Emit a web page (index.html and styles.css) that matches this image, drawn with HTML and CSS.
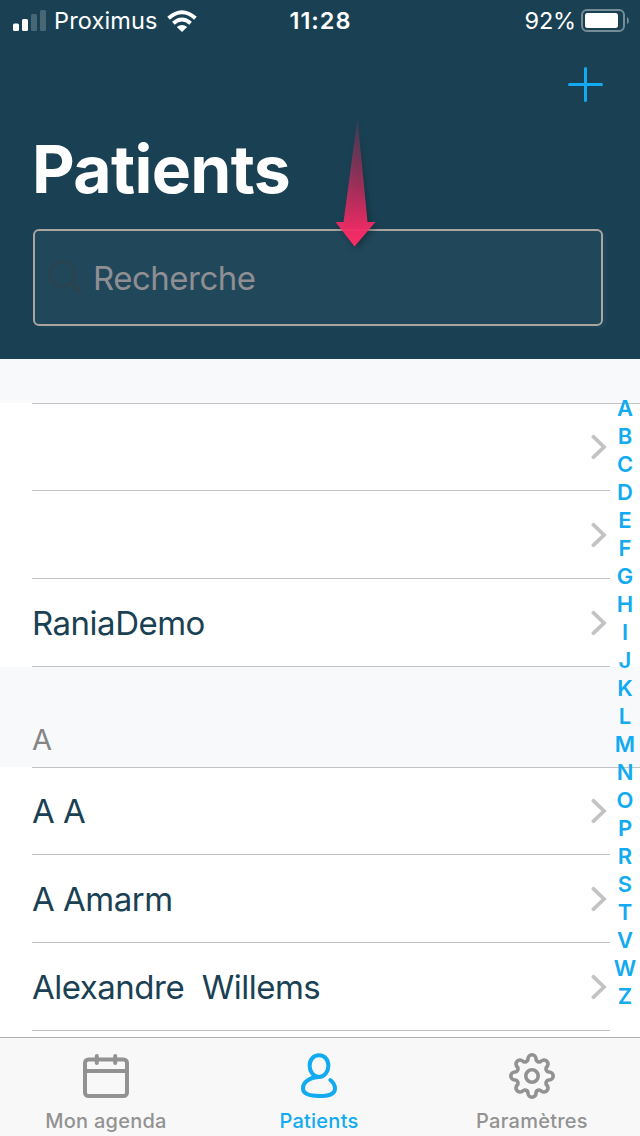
FILE: index.html
```html
<!DOCTYPE html>
<html lang="fr">
<head>
<meta charset="utf-8">
<title>Patients</title>
<link rel="stylesheet" href="styles.css">
</head>
<body>
<div class="screen">
  <header class="header">
    <div class="status">
      <div class="status-left">
        <svg class="signal" width="34" height="22" viewBox="0 0 34 22"><g fill="#fff"><rect x="0" y="13.5" width="6" height="7.5" rx="1.5"/><rect x="9" y="9" width="6" height="12" rx="1.5"/><g opacity=".2"><rect x="18" y="4" width="6" height="17" rx="1.5"/><rect x="27" y="0" width="6" height="21" rx="1.5"/></g></g></svg>
        <span class="carrier">Proximus</span>
        <svg class="wifi" width="30" height="22" viewBox="0 0 30 22"><g fill="none" stroke="#fff" stroke-width="4"><path d="M1.6 8.3Q15 -3.8 28.4 8.3"/><path d="M6.4 13.2Q15 5.8 23.6 13.2"/></g><path d="M9.8 17Q15 12.8 20.2 17L15 22Z" fill="#fff"/></svg>
      </div>
      <span class="time">11:28</span>
      <div class="status-right">
        <span class="percent">92%</span>
        <svg class="battery" width="49" height="24" viewBox="0 0 49 24"><rect x="1" y="1" width="42" height="21" rx="5" fill="none" stroke="#fff" stroke-opacity=".4" stroke-width="2"/><rect x="4" y="4" width="33" height="15" rx="2.5" fill="#fff"/><path d="M46 8Q48 9 48 11.5T46 15Z" fill="#fff" opacity=".4"/></svg>
      </div>
    </div>
    <div class="actions">
      <svg width="36" height="36" viewBox="0 0 36 36"><path d="M17.500 1.500V33.500M1.500 17.500H33.500" stroke="#12aaf0" stroke-width="3" stroke-linecap="round"/></svg>
    </div>
    <h1 class="title">Patients</h1>
    <div class="search">
      <svg class="search-icon" width="34" height="34" viewBox="0 0 34 34"><g fill="none" stroke="#2b424f"><circle cx="14" cy="14" r="12.2" stroke-width="2.7"/><path d="M23 23L31.3 31" stroke-width="4.4" stroke-linecap="round"/></g></svg>
      <span class="placeholder">Recherche</span>
    </div>
    <svg class="arrow" width="60" height="140" viewBox="0 0 60 140">
      <defs><linearGradient id="fade" x1="0" y1="0" x2="0" y2="1"><stop offset="0" stop-color="#f92b67" stop-opacity=".12"/><stop offset=".5" stop-color="#f92b67" stop-opacity=".57"/><stop offset=".85" stop-color="#f92b67" stop-opacity=".92"/><stop offset="1" stop-color="#fc2b67"/></linearGradient></defs>
      <path d="M32.5 8L42.5 112H50.5L29.5 136.5L10.5 112H18.5Z" fill="url(#fade)"/>
    </svg>
  </header>

  <main class="list">
    <div class="section section-first"></div>
    <div class="row row-first"><span></span><svg class="chevron" viewBox="0 0 16 26"><path d="M2.5 2.8L13 13L2.5 23.2"/></svg></div>
    <div class="row"><span></span><svg class="chevron" viewBox="0 0 16 26"><path d="M2.5 2.8L13 13L2.5 23.2"/></svg></div>
    <div class="row"><span>RaniaDemo</span><svg class="chevron" viewBox="0 0 16 26"><path d="M2.5 2.8L13 13L2.5 23.2"/></svg></div>
    <div class="section"><span>A</span></div>
    <div class="row row-first"><span>A A</span><svg class="chevron" viewBox="0 0 16 26"><path d="M2.5 2.8L13 13L2.5 23.2"/></svg></div>
    <div class="row"><span>A Amarm</span><svg class="chevron" viewBox="0 0 16 26"><path d="M2.5 2.8L13 13L2.5 23.2"/></svg></div>
    <div class="row"><span>Alexandre  Willems</span><svg class="chevron" viewBox="0 0 16 26"><path d="M2.5 2.8L13 13L2.5 23.2"/></svg></div>
  </main>

  <nav class="index">
    <span>A</span><span>B</span><span>C</span><span>D</span><span>E</span><span>F</span><span>G</span><span>H</span><span>I</span><span>J</span><span>K</span><span>L</span><span>M</span><span>N</span><span>O</span><span>P</span><span>R</span><span>S</span><span>T</span><span>V</span><span>W</span><span>Z</span>
  </nav>

  <footer class="tabs">
    <div class="tab">
      <svg width="48" height="48" viewBox="-24 -24 48 48" fill="none" stroke="#929292" stroke-width="4" stroke-linecap="round"><rect x="-21" y="-16.5" width="42" height="36.5" rx="3.5"/><path d="M-20 -5H20M-9.2 -20V-13M9.2 -20V-13"/></svg>
      <span>Mon agenda</span>
    </div>
    <div class="tab tab-active">
      <svg width="48" height="48" viewBox="-24 -24 48 48" fill="none" stroke="#12aaf0" stroke-width="4" stroke-linecap="round"><path d="M0 -20.7C5.8 -20.7 9.4 -16 9.4 -10.3C9.4 -4.5 5.5 1 0 1C-5.5 1 -9.4 -4.5 -9.4 -10.3C-9.4 -16 -5.8 -20.7 0 -20.7Z"/><path d="M-1 1C-9 1.4 -16 6 -16 12.3C-16 18.7 -9 20 0 20C9.500 20 16 18.7 16 12.5C16 9 14 6.200 11.300 4"/></svg>
      <span>Patients</span>
    </div>
    <div class="tab">
      <svg width="48" height="48" viewBox="-24 -24 48 48" fill="none" stroke="#929292" stroke-width="3.6"><circle r="6.200"/><path d="M-4 -17.19A4 4 0 0 1 4 -17.19A3.100 3.100 0 0 0 9.330 -14.980A4 4 0 0 1 14.980 -9.330A3.100 3.100 0 0 0 17.190 -4A4 4 0 0 1 17.190 4A3.100 3.100 0 0 0 14.980 9.330A4 4 0 0 1 9.330 14.980A3.100 3.100 0 0 0 4 17.190A4 4 0 0 1 -4 17.190A3.100 3.100 0 0 0 -9.330 14.980A4 4 0 0 1 -14.980 9.330A3.100 3.100 0 0 0 -17.190 4A4 4 0 0 1 -17.190 -4A3.100 3.100 0 0 0 -14.980 -9.330A4 4 0 0 1 -9.330 -14.980A3.100 3.100 0 0 0 -4 -17.190Z"/></svg>
      <span>Paramètres</span>
    </div>
  </footer>
</div>
</body>
</html>
```
FILE: styles.css
```css
* { box-sizing: border-box; }
body { margin: 0; font-family: Inter, "Liberation Sans", sans-serif; }
svg { display: block; flex: none; }
.screen { position: relative; width: 640px; height: 1136px; display: flex; flex-direction: column; overflow: hidden; background: #fff; }

.header { position: relative; flex: none; height: 359px; background: #1a4153; color: #fff; display: flex; flex-direction: column; }
.status { height: 40px; display: grid; grid-template-columns: 1fr auto 1fr; align-items: center; padding: 0 10px 0 13px; font-size: 23.5px; line-height: 40px; }
.status-left, .status-right { display: flex; align-items: center; }
.status-right { justify-content: flex-end; }
.carrier { margin-left: 7px; padding-top: 1px; letter-spacing: 0.15px; }
.wifi { margin-left: 9px; }
.time { padding: 1px 2px 0 0; font-weight: 600; letter-spacing: 1px; }
.percent { padding-top: 1px; margin-right: 5px; letter-spacing: -0.2px; }
.actions { height: 89px; display: flex; justify-content: flex-end; padding: 27px 36px 0 0; }
.title { margin: 0; padding-left: 32px; height: 80px; font-size: 66px; line-height: 80px; font-weight: 700; letter-spacing: -0.65px; }
.search { margin: 20px 37px 0 33px; height: 97px; border: 2px solid #aaa5a1; border-radius: 6px; background: #21475a; display: flex; align-items: center; padding-left: 13px; box-shadow: 5px 3px 0 -1px #1d4457; }
.search-icon { margin-top: -1px; }
.placeholder { margin-left: 11px; font-size: 33px; letter-spacing: -0.5px; color: #8e8e93; }
.arrow { position: absolute; left: 325px; top: 110px; filter: drop-shadow(2px 2px 3px rgba(0, 0, 0, 0.35)); }

.list { flex: 1; min-height: 0; }
.section { height: 100px; padding: 53px 0 0 32px; background: #f8f9fb; color: #858585; font-size: 29px; line-height: 40px; }
.section-first { height: 44px; padding: 0; }
.row { height: 88px; margin-left: 32px; padding-right: 33px; display: flex; align-items: center; justify-content: space-between; color: #1a4153; font-size: 33px; letter-spacing: -0.5px; white-space: pre; background: linear-gradient(#c3c3c5, #c3c3c5) left bottom / 578px 1px no-repeat; }
.row-first { box-shadow: inset 0 1px 0 #c3c3c5; }
.chevron { width: 16px; height: 26px; fill: none; stroke: #c3c3c5; stroke-width: 3.8; stroke-linecap: round; }

.index { position: absolute; top: 394px; right: 0; width: 30px; display: flex; flex-direction: column; align-items: center; color: #12aaf0; font-size: 22px; font-weight: 600; line-height: 28px; }

.tabs { flex: none; height: 99px; border-top: 1px solid #b0b0b1; background: #f8f8f8; display: grid; grid-template-columns: 212px 214px 212px; justify-content: start; }
.tab { display: flex; flex-direction: column; align-items: center; padding-top: 14px; color: #929292; font-size: 20px; font-weight: 500; line-height: 24px; letter-spacing: 0.25px; }
.tab span { margin-top: 9px; }
.tab-active { color: #12aaf0; }
```
